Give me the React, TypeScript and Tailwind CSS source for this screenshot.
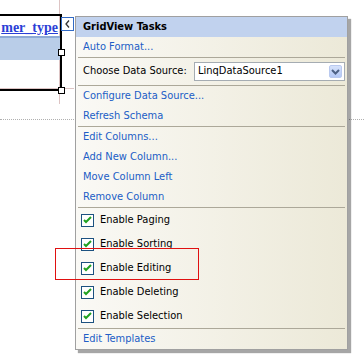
import React from 'react';

const font = { fontFamily: '"DejaVu Sans Condensed", "DejaVu Sans", Tahoma, sans-serif' };

function Separator() {
  return <div className="mx-[2px] h-px bg-[#ACA899]" />;
}

function LinkRow({ label }: { label: string }) {
  return <div className="h-5 flex items-center pl-[7px] text-[11px] text-[#215DC6]">{label}</div>;
}

function CheckRow({ label }: { label: string }) {
  return (
    <div className="h-6 flex items-center gap-[6px] pl-[5px] text-[11px] text-black">
      <span className="w-[13px] h-[13px] border border-[#1C5180] bg-white flex items-center justify-center">
        <svg width="9" height="8" viewBox="0 0 9 8">
          <path d="M1 4 L3 6 L8 1" stroke="#21A121" strokeWidth="2" fill="none" />
        </svg>
      </span>
      {label}
    </div>
  );
}

function TasksPanel() {
  return (
    <div
      className="absolute left-[75px] top-[16px] w-[273px] border border-[#A0A0A0] bg-gradient-to-r from-[#FAF9F5] to-[#ECE9D8] shadow-[3px_3px_1px_rgba(0,0,0,0.35)]"
      style={font}
    >
      <div className="h-5 flex items-center pl-[7px] bg-[#C1D2EE] text-[11px] font-bold text-black">
        GridView Tasks
      </div>
      <LinkRow label="Auto Format..." />
      <Separator />
      <div className="h-[27px] flex items-center pl-[7px] pr-[2px] text-[11px] text-black">
        <span className="w-[111px]">Choose Data Source:</span>
        <div className="flex-1 h-[19px] border border-[#A5ACB2] bg-white flex items-center justify-between pl-[3px] pr-[2px]">
          <span>LinqDataSource1</span>
          <span className="w-[13px] h-[13px] rounded-[2px] border border-[#B9C9EF] bg-gradient-to-b from-[#D6E2FB] to-[#B4C8F5] flex items-center justify-center">
            <svg width="9" height="6" viewBox="0 0 9 6">
              <path d="M1 1 L4.5 4.5 L8 1" stroke="#4D6185" strokeWidth="2" fill="none" />
            </svg>
          </span>
        </div>
      </div>
      <Separator />
      <LinkRow label="Configure Data Source..." />
      <LinkRow label="Refresh Schema" />
      <Separator />
      <LinkRow label="Edit Columns..." />
      <LinkRow label="Add New Column..." />
      <LinkRow label="Move Column Left" />
      <LinkRow label="Remove Column" />
      <Separator />
      <CheckRow label="Enable Paging" />
      <CheckRow label="Enable Sorting" />
      <CheckRow label="Enable Editing" />
      <CheckRow label="Enable Deleting" />
      <CheckRow label="Enable Selection" />
      <Separator />
      <LinkRow label="Edit Templates" />
    </div>
  );
}

function GridControl() {
  // selected GridView on the design surface, with its resize handles and smart tag
  return (
    <div className="absolute left-0 top-[14px] w-[74px] h-[80px]">
      <div className="w-[62px] h-[77px] border-2 border-l-0 border-black overflow-hidden">
        <div className="h-[22px] flex items-end justify-end pr-[2px] border-b-2 border-[#8DA9D4]">
          <span
            className="text-[14px] font-bold underline text-[#2B3FD6] leading-none mb-[1px] whitespace-nowrap"
            style={{ fontFamily: '"Liberation Serif", serif' }}
          >
            mer_type
          </span>
        </div>
        <div className="h-[22px] bg-[#B9CDE8]" />
      </div>
      <div className="absolute left-[58px] top-[35px] w-[7px] h-[7px] border border-black bg-white" />
      <div className="absolute left-[58px] top-[73px] w-[7px] h-[7px] border border-black bg-white" />
      <div className="absolute left-[61px] top-[3px] w-[13px] h-[14px] border border-[#316AC5] bg-white flex items-center justify-center">
        <svg width="5" height="8" viewBox="0 0 5 8">
          <path d="M4 0.5 L1 4 L4 7.5" stroke="#333" strokeWidth="1.3" fill="none" />
        </svg>
      </div>
    </div>
  );
}

export default function App() {
  return (
    <div className="relative w-[364px] h-[361px] bg-white overflow-hidden">
      <div className="absolute left-[59px] top-0 w-px h-[104px] bg-[#DDC4C4]" />
      <div className="absolute left-0 top-[88px] w-[74px] h-px bg-[#DDC4C4]" />
      <div className="absolute left-0 right-0 top-[119px] border-t border-dotted border-[#B0B0B0]" />
      <GridControl />
      <TasksPanel />
      <div className="absolute left-[55px] top-[248px] w-[144px] h-[32px] border border-[#E01010]" />
    </div>
  );
}
